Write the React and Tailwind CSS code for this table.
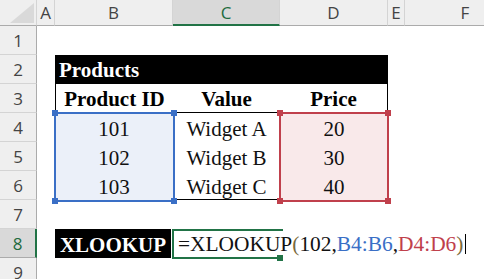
const serif = "[font-family:Liberation_Serif,Times_New_Roman,serif] text-[21px] leading-none";
const sans = "[font-family:Open_Sans,Liberation_Sans,sans-serif] text-[17px] leading-none";

function ColHead({ label, active, last }) {
  return (
    <div
      className={`flex items-center justify-center ${sans} ${
        active
          ? "bg-[#d9d9d9] text-[#1e6b3e] border-b-2 border-[#217346]"
          : "bg-[#efefef] text-[#444] border-b border-[#ababab]"
      } ${last ? "" : "border-r border-r-[#d4d4d4]"}`}
    >
      {label}
    </div>
  );
}

function RowHead({ n, active }) {
  return (
    <div
      className={`col-start-1 flex items-center justify-center ${sans} ${
        active
          ? "bg-[#d9d9d9] text-[#1e6b3e] border-r-2 border-[#217346] border-b border-b-[#ababab]"
          : "bg-[#efefef] text-[#444] border-r border-[#ababab] border-b border-b-[#d4d4d4]"
      }`}
    >
      {n}
    </div>
  );
}

function Handle({ className, color }) {
  return <div className={`absolute w-[6px] h-[6px] ${color} ${className}`} />;
}

export default function App() {
  const ids = ["101", "102", "103"];
  const names = ["Widget A", "Widget B", "Widget C"];
  const prices = ["20", "30", "40"];

  return (
    <div className="relative w-[484px] h-[279px] overflow-hidden bg-white">
      <div className="grid grid-cols-[37px_18px_118px_107px_108px_17px_120px] grid-rows-[26px_repeat(9,29px)] w-[425px]">
        {/* header row */}
        <div className="bg-[#efefef] border-b border-[#ababab] border-r border-r-[#d4d4d4] relative">
          <svg className="absolute left-[10px] top-[3px]" width="24" height="20" viewBox="0 0 24 20">
            <polygon points="24,0 24,20 0,20" fill="#d9d9d9" />
          </svg>
        </div>
        <ColHead label="A" />
        <ColHead label="B" />
        <ColHead label="C" active />
        <ColHead label="D" />
        <ColHead label="E" />
        <ColHead label="F" last />

        {/* row 1 */}
        <RowHead n="1" />
        <div className="col-span-6" />

        {/* row 2 */}
        <RowHead n="2" />
        <div />
        <div className={`col-span-3 bg-black text-white font-bold flex items-center pl-[4px] pt-[2px] ${serif}`}>
          Products
        </div>
        <div className="col-span-2" />

        {/* row 3 */}
        <RowHead n="3" />
        <div />
        <div className={`border-l border-black border-b flex items-center justify-center font-bold pt-[3px] ${serif}`}>
          Product ID
        </div>
        <div className={`border-b border-black flex items-center justify-center font-bold pt-[3px] ${serif}`}>
          Value
        </div>
        <div className={`border-r border-black border-b flex items-center justify-center font-bold pt-[3px] ${serif}`}>
          Price
        </div>
        <div className="col-span-2" />

        {/* rows 4-6 */}
        {ids.map((id, i) => (
          <div key={id} className="contents">
            <RowHead n={String(4 + i)} />
            <div />
            <div className={`bg-[#ebf0f9] flex items-center justify-center pt-[4px] text-[#111] ${serif}`}>{id}</div>
            <div
              className={`flex items-center justify-center pt-[4px] text-[#111] ${serif} ${
                i === 2 ? "border-b border-black" : ""
              }`}
            >
              {names[i]}
            </div>
            <div className={`bg-[#f9e9ea] flex items-center justify-center pt-[4px] text-[#111] ${serif}`}>
              {prices[i]}
            </div>
            <div className="col-span-2" />
          </div>
        ))}

        {/* row 7 */}
        <RowHead n="7" />
        <div className="col-span-6" />

        {/* row 8 */}
        <RowHead n="8" active />
        <div />
        <div className={`bg-black text-white font-bold flex items-center justify-center pt-[3px] mr-[2px] ${serif}`}>
          XLOOKUP
        </div>
        <div className="col-span-4 flex items-center pl-[5px] pt-[3px] text-[#111] whitespace-nowrap [font-family:Liberation_Serif,Times_New_Roman,serif] text-[21.4px] leading-none">
          <span>=XLOOKUP</span>
          <span className="text-[#7a6a3c]">(</span>
          <span>102,</span>
          <span className="text-[#3a6fc6]">B4:B6</span>
          <span>,</span>
          <span className="text-[#c0404c]">D4:D6</span>
          <span className="text-[#7a6a3c]">)</span>
          <span className="inline-block w-px h-[20px] bg-black ml-[2px] mt-[-2px]" />
        </div>

        {/* row 9 */}
        <RowHead n="9" />
        <div className="col-span-6" />
      </div>

      {/* range highlight for B4:B6 */}
      <div className="absolute left-[54px] top-[112px] w-[121px] h-[90px] border-2 border-[#3a6fc6] pointer-events-none" />
      <Handle color="bg-[#3a6fc6]" className="left-[52px] top-[110px]" />
      <Handle color="bg-[#3a6fc6]" className="left-[171px] top-[110px]" />
      <Handle color="bg-[#3a6fc6]" className="left-[52px] top-[198px]" />
      <Handle color="bg-[#3a6fc6]" className="left-[171px] top-[198px]" />

      {/* range highlight for D4:D6 */}
      <div className="absolute left-[279px] top-[112px] w-[110px] h-[90px] border-2 border-[#c0404c] pointer-events-none" />
      <Handle color="bg-[#c0404c]" className="left-[277px] top-[110px]" />
      <Handle color="bg-[#c0404c]" className="left-[385px] top-[110px]" />
      <Handle color="bg-[#c0404c]" className="left-[277px] top-[198px]" />
      <Handle color="bg-[#c0404c]" className="left-[385px] top-[198px]" />

      {/* active cell C8 */}
      <div className="absolute left-[172px] top-[229px] w-[111px] h-[30px] border-t-2 border-l-2 border-b-2 border-[#217346] pointer-events-none" />
      <Handle color="bg-[#217346]" className="left-[277px] top-[255px]" />
    </div>
  );
}
